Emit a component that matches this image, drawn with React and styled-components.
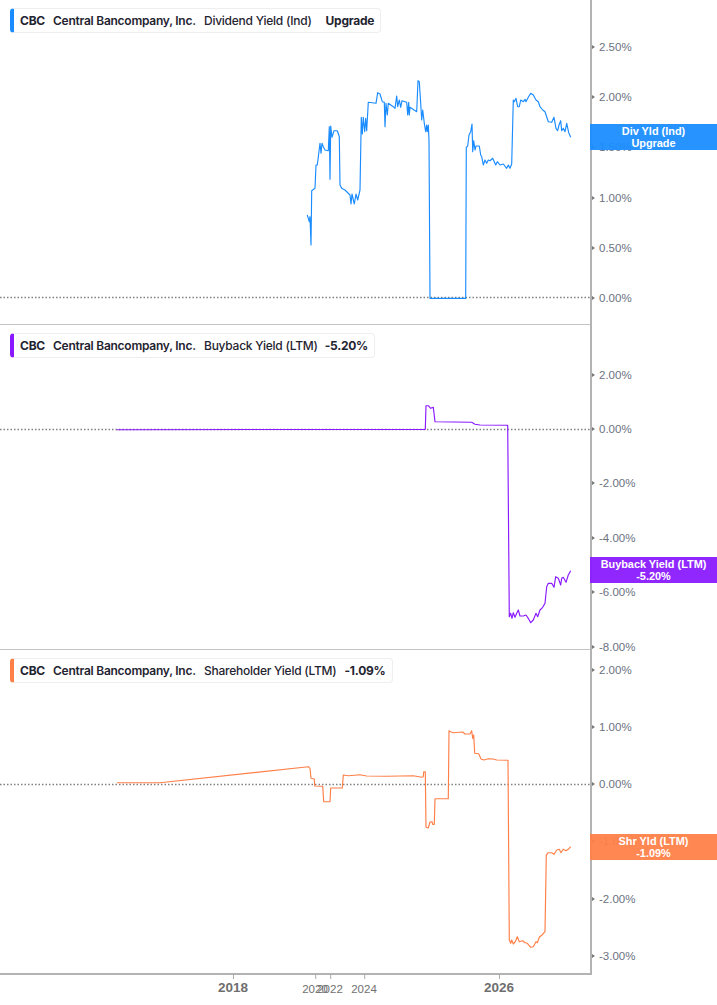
import React from "react";
import styled, { createGlobalStyle } from "styled-components";

const Global = createGlobalStyle`
  html, body { margin: 0; padding: 0; background: #fff; }
  body { width: 717px; height: 1005px; overflow: hidden; font-family: "Liberation Sans", Arial, sans-serif; }
`;

const toPoints = (raw, ox, oy, scale = 3) =>
  raw.map(([x, y]) => `${(ox + x / scale).toFixed(1)},${(oy + y / scale).toFixed(1)}`).join(" ");

const blue = [[52,465],[58,485],[60,470],[63,555],[65,392],[75,385],[78,315],[82,315],[90,250],[93,280],[96,250],[100,260],[105,270],[115,272],[118,200],[120,358],[122,198],[126,232],[132,212],[142,212],[148,230],[150,375],[155,385],[165,390],[180,405],[183,432],[186,402],[193,432],[198,402],[203,420],[210,390],[214,172],[217,222],[220,172],[224,215],[227,175],[230,212],[235,127],[258,130],[263,98],[270,102],[277,125],[283,127],[285,200],[288,130],[292,165],[295,130],[310,140],[315,145],[320,108],[323,140],[328,120],[332,142],[336,122],[350,127],[353,165],[356,127],[358,165],[360,142],[380,155],[384,62],[388,65],[392,130],[395,180],[398,150],[403,190],[407,215],[410,195],[412,215],[415,195],[417,240],[420,715],[527,715],[529,262],[533,258],[537,225],[542,215],[546,192],[548,275],[551,242],[555,270],[558,258],[568,258],[572,285],[575,290],[580,315],[585,300],[590,310],[595,300],[600,302],[608,295],[617,315],[622,305],[630,315],[640,312],[650,325],[655,315],[660,325],[665,312],[670,120],[673,125],[678,115],[683,140],[688,140],[692,120],[700,125],[705,118],[708,125],[715,112],[722,100],[730,105],[738,120],[745,125],[750,140],[758,150],[765,155],[775,185],[785,187],[792,172],[798,205],[803,212],[807,195],[812,182],[815,212],[820,205],[825,215],[830,190],[836,218],[842,232]];
const purple = [[-850,119],[76,118],[78,47],[85,47],[92,55],[100,52],[105,95],[215,97],[225,103],[240,105],[323,106],[328,680],[332,670],[336,685],[340,668],[345,682],[350,670],[355,660],[360,678],[370,678],[378,675],[385,685],[392,698],[400,690],[408,670],[413,680],[420,660],[428,652],[435,640],[440,590],[445,580],[455,580],[462,592],[467,560],[475,565],[482,585],[485,565],[490,562],[498,577],[505,555],[512,542]];
const orange = [[-489,188],[-360,188],[85,140],[90,145],[93,175],[103,177],[104,198],[128,199],[131,245],[150,245],[152,204],[187,204],[190,165],[205,167],[240,164],[260,168],[320,169],[400,167],[425,172],[430,170],[431,155],[436,155],[438,322],[445,324],[450,306],[456,305],[458,313],[463,313],[465,236],[505,236],[507,32],[512,35],[520,38],[548,36],[555,42],[570,42],[575,32],[578,55],[581,45],[584,100],[596,101],[603,117],[612,120],[625,116],[640,117],[650,120],[684,121],[688,660],[692,670],[695,660],[700,672],[706,665],[712,650],[718,665],[728,662],[735,668],[742,670],[752,682],[760,680],[768,665],[772,668],[778,652],[786,645],[795,635],[799,405],[805,398],[815,398],[822,403],[830,390],[838,388],[843,398],[850,388],[858,392],[865,388],[872,380]];

const panels = [
  {
    top: 0, height: 325, color: "#1a8cff", zero: 297.5, points: toPoints(blue, 290, 60),
    measure: "Dividend Yield (Ind)", value: "Upgrade", valueGap: 14, legendTop: 8,
    badge: ["Div Yld (Ind)", "Upgrade"], badgeTop: 124,
    ticks: [[47, "2.50%"], [97, "2.00%"], [147, "1.50%"], [198, "1.00%"], [248, "0.50%"], [298, "0.00%"]],
  },
  {
    top: 325, height: 325, color: "#8a19ff", zero: 429.5, points: toPoints(purple, 400, 390),
    measure: "Buyback Yield (LTM)", value: "-5.20%", valueGap: 7, legendTop: 333,
    badge: ["Buyback Yield (LTM)", "-5.20%"], badgeTop: 557,
    ticks: [[375, "2.00%"], [429, "0.00%"], [483, "-2.00%"], [538, "-4.00%"], [592, "-6.00%"], [647, "-8.00%"]],
  },
  {
    top: 650, height: 325, color: "#ff7f47", zero: 784.5, points: toPoints(orange, 280, 720),
    measure: "Shareholder Yield (LTM)", value: "-1.09%", valueGap: 8, legendTop: 658,
    badge: ["Shr Yld (LTM)", "-1.09%"], badgeTop: 834,
    ticks: [[670, "2.00%"], [727, "1.00%"], [784, "0.00%"], [841, "-1.00%"], [899, "-2.00%"], [956, "-3.00%"]],
  },
];

const years = [
  { x: 233, label: "2018", major: true },
  { x: 315, label: "2020" },
  { x: 330, label: "2022" },
  { x: 364, label: "2024" },
  { x: 499, label: "2026", major: true },
];

const Page = styled.div`
  width: 717px;
  height: 1005px;
  display: flex;
  flex-direction: column;
  overflow: hidden;
`;
const Panel = styled.section`
  display: flex;
  height: 325px;
  flex: none;
`;
const Plot = styled.div`
  position: relative;
  width: 590px;
  flex: none;
  box-sizing: border-box;
  border-bottom: ${p => (p.$last ? "2px solid #b3b3b3" : "1px solid #c4c4c4")};
`;
const Lines = styled.svg`
  position: absolute;
  left: 0;
  top: 0;
  width: 590px;
  height: 325px;
`;
const Legend = styled.div`
  position: absolute;
  left: 10px;
  top: ${p => p.$top}px;
  height: 25px;
  box-sizing: border-box;
  display: flex;
  align-items: center;
  padding: 0 6px;
  background: #fff;
  border: 1px solid #eeeeee;
  border-left: 4px solid ${p => p.$color};
  border-radius: 4px;
  font-family: Inter, "Liberation Sans", sans-serif;
  font-size: 12px;
  letter-spacing: -0.25px;
  color: #1f2430;
  white-space: nowrap;
`;
const Ticker = styled.b`
  font-weight: 700;
  width: 33px;
`;
const Company = styled.b`
  font-weight: 600;
  width: 151px;
`;
const Measure = styled.span`
  font-weight: 500;
`;
const Value = styled.b`
  font-weight: 700;
  margin-left: ${p => p.$gap}px;
`;
const Axis = styled.div`
  position: relative;
  width: 127px;
  flex: none;
  box-sizing: border-box;
  border-left: 2px solid #b3b3b3;
`;
const Tick = styled.div`
  position: absolute;
  left: 7px;
  top: ${p => p.$y}px;
  transform: translateY(-50%);
  font-size: 11.5px;
  line-height: 14px;
  color: #6b7280;
  white-space: nowrap;
  &::before {
    content: "";
    position: absolute;
    left: -7px;
    top: 4.5px;
    border-left: 3px solid #777;
    border-top: 2.5px solid transparent;
    border-bottom: 2.5px solid transparent;
  }
`;
const Badge = styled.div`
  position: absolute;
  left: -2px;
  right: 0;
  top: ${p => p.$top}px;
  height: 26px;
  background: ${p => p.$color}f0;
  color: #fff;
  font-size: 10.9px;
  font-weight: 700;
  line-height: 12px;
  text-align: center;
  display: flex;
  flex-direction: column;
  justify-content: center;
`;
const XAxis = styled.footer`
  position: relative;
  height: 30px;
  flex: none;
`;
const Year = styled.div`
  position: absolute;
  left: ${p => p.$x}px;
  top: ${p => (p.$major ? 5 : 6)}px;
  transform: translateX(-50%);
  font-size: ${p => (p.$major ? "13.5px" : "11.5px")};
  font-weight: ${p => (p.$major ? 700 : 400)};
  line-height: 16px;
  color: ${p => (p.$major ? "#6e6e6e" : "#707070")};
  &::before {
    content: "";
    position: absolute;
    left: 50%;
    top: ${p => (p.$major ? -6 : -7)}px;
    width: 1px;
    height: 5px;
    background: #aaa;
  }
`;

export default function App() {
  return (
    <Page>
      <Global />
      {panels.map((p, i) => (
        <Panel key={p.measure}>
          <Plot $last={i === 2}>
            <Lines viewBox={`0 ${p.top} 590 ${p.height}`}>
              <line x1="0" x2="590" y1={p.zero} y2={p.zero} stroke="#808080" strokeWidth="1.4" strokeDasharray="1.5 2" />
              <polyline points={p.points} fill="none" stroke={p.color} strokeWidth="1.15" strokeLinejoin="round" />
            </Lines>
            <Legend $top={p.legendTop - p.top} $color={p.color}>
              <Ticker>CBC</Ticker>
              <Company>Central Bancompany, Inc.</Company>
              <Measure>{p.measure}</Measure>
              <Value $gap={p.valueGap}>{p.value}</Value>
            </Legend>
          </Plot>
          <Axis>
            {p.ticks.map(([y, label]) => (
              <Tick key={label} $y={y - p.top}>{label}</Tick>
            ))}
            <Badge $top={p.badgeTop - p.top} $color={p.color}>
              <span>{p.badge[0]}</span>
              <span>{p.badge[1]}</span>
            </Badge>
          </Axis>
        </Panel>
      ))}
      <XAxis>
        {years.map(y => (
          <Year key={y.label} $x={y.x} $major={y.major}>{y.label}</Year>
        ))}
      </XAxis>
    </Page>
  );
}
